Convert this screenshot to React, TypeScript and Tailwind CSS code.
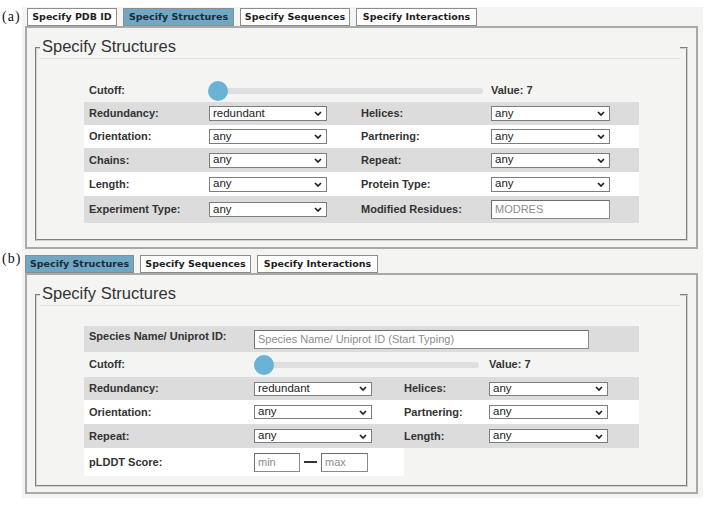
import React from "react";

// Two stacked screenshots of the "Specify Structures" search form, (a) and (b).

const SANS = "font-['Liberation_Sans',Arial,sans-serif]";

function Chevron() {
  return (
    <svg width="8" height="5" viewBox="0 0 8 5" className="shrink-0" aria-hidden="true">
      <path d="M1 1l3 3 3-3" fill="none" stroke="#1f1f1f" strokeWidth="1.7" />
    </svg>
  );
}

function Select({ value, w, h }: { value: string; w: string; h: string }) {
  return (
    <div
      className={`flex items-center justify-between border border-[#7d7d7d] bg-white pl-[3px] pr-[4px] text-[11.5px] leading-none text-[#222] ${w} ${h}`}
    >
      <span>{value}</span>
      <Chevron />
    </div>
  );
}

function TextBox({ placeholder, w }: { placeholder: string; w: string }) {
  return (
    <div
      className={`flex h-[19px] items-center border border-[#8a8a8a] border-t-[#6e6e6e] border-l-[#6e6e6e] bg-white pl-[3px] text-[11px] leading-none text-[#8c8c8c] ${w}`}
    >
      {placeholder}
    </div>
  );
}

function Label({ children, pad = true }: { children: React.ReactNode; pad?: boolean }) {
  return (
    <div className={`text-[11px] leading-[13px] font-bold text-[#333] ${pad ? "pl-[5px]" : ""}`}>
      {children}
    </div>
  );
}

function Slider({ pr }: { pr: string }) {
  return (
    <div className={`flex items-center ${pr}`}>
      <div className="relative z-10 h-[20px] w-[20px] shrink-0 rounded-full bg-[#6ab3d5]" />
      <div className="-ml-[10px] h-[6px] flex-1 rounded-full bg-[#dedede]" />
    </div>
  );
}

function Tab({ label, w, active = false }: { label: string; w: string; active?: boolean }) {
  return (
    <div
      className={`flex h-[18px] items-center justify-center border border-[#8c8c8c] font-['DejaVu_Sans',Verdana,sans-serif] text-[9.5px] font-bold ${w} ${
        active ? "bg-[#70a7c5] text-[#1b2a36]" : "bg-white text-[#1e1e1e]"
      }`}
    >
      {label}
    </div>
  );
}

function Legend() {
  return (
    <legend className="ml-[3px] w-[640px] border-b border-[#e0e0e0] pb-[2px] pl-[2px] text-[16.5px] leading-[19px] text-[#333]">
      Specify Structures
    </legend>
  );
}

function Tag({ children }: { children: string }) {
  return (
    <div className="w-[22px] pl-[2px] pt-[2px] font-['Liberation_Serif','Times_New_Roman',serif] text-[14px] leading-[16px] tracking-[1px] text-[#111]">
      {children}
    </div>
  );
}

const ROW_A = "grid grid-cols-[125px_147px_135px_148px] items-center";
const ROW_B = "grid grid-cols-[170px_150px_85px_150px] items-center";

export default function App() {
  return (
    <div className={`h-[506px] w-[709px] bg-white pt-[7px] ${SANS}`}>
      {/* (a) */}
      <div className="flex">
        <Tag>(a)</Tag>
        <div className="w-[681px] bg-[#f4f5f3] pl-[3px] pt-[1px]">
          <div className="flex gap-[6px] pl-[2px]">
            <Tab label="Specify PDB ID" w="w-[90px]" />
            <Tab label="Specify Structures" w="w-[111px]" active />
            <Tab label="Specify Sequences" w="w-[110px]" />
            <Tab label="Specify Interactions" w="w-[121px]" />
          </div>
          <div className="w-[673px] border-2 border-[#a9a9a9] px-[8px] pt-[9px] pb-[6px]">
            <fieldset className="border-2 border-[#d2d2d2] pb-[16px] [border-style:groove]">
              <Legend />
              <div className="mx-auto mt-[20px] w-[555px]">
                <div className={`${ROW_A} h-[23px]`}>
                  <Label>Cutoff:</Label>
                  <div className="col-span-2 -ml-[1px]">
                    <Slider pr="pr-[8px]" />
                  </div>
                  <Label pad={false}>Value: 7</Label>
                </div>
                <div className={`${ROW_A} h-[23px] bg-[#dcdcdc]`}>
                  <Label>Redundancy:</Label>
                  <Select value="redundant" w="w-[118px]" h="h-[15px]" />
                  <Label>Helices:</Label>
                  <Select value="any" w="w-[119px]" h="h-[15px]" />
                </div>
                <div className={`${ROW_A} h-[23px] bg-white`}>
                  <Label>Orientation:</Label>
                  <Select value="any" w="w-[118px]" h="h-[15px]" />
                  <Label>Partnering:</Label>
                  <Select value="any" w="w-[119px]" h="h-[15px]" />
                </div>
                <div className={`${ROW_A} h-[24px] bg-[#dcdcdc]`}>
                  <Label>Chains:</Label>
                  <Select value="any" w="w-[118px]" h="h-[15px]" />
                  <Label>Repeat:</Label>
                  <Select value="any" w="w-[119px]" h="h-[15px]" />
                </div>
                <div className={`${ROW_A} h-[24px] bg-white`}>
                  <Label>Length:</Label>
                  <Select value="any" w="w-[118px]" h="h-[15px]" />
                  <Label>Protein Type:</Label>
                  <Select value="any" w="w-[119px]" h="h-[15px]" />
                </div>
                <div className={`${ROW_A} h-[27px] bg-[#dcdcdc]`}>
                  <Label>Experiment Type:</Label>
                  <Select value="any" w="w-[118px]" h="h-[15px]" />
                  <Label>Modified Residues:</Label>
                  <TextBox placeholder="MODRES" w="w-[119px]" />
                </div>
              </div>
            </fieldset>
          </div>
        </div>
      </div>

      {/* (b) */}
      <div className="flex">
        <Tag>(b)</Tag>
        <div className="w-[681px] bg-[#f4f5f3] pl-[3px] pt-[6px] pb-[4px]">
          <div className="flex gap-[6px]">
            <Tab label="Specify Structures" w="w-[109px]" active />
            <Tab label="Specify Sequences" w="w-[111px]" />
            <Tab label="Specify Interactions" w="w-[121px]" />
          </div>
          <div className="w-[673px] border-2 border-[#a9a9a9] px-[8px] pt-[9px] pb-[5px]">
            <fieldset className="border-2 border-[#d2d2d2] pb-[9px] [border-style:groove]">
              <Legend />
              <div className="mx-auto mt-[20px] w-[555px]">
                <div className={`${ROW_B} h-[26px] items-start bg-[#dcdcdc] pt-[4px]`}>
                  <Label>Species Name/ Uniprot ID:</Label>
                  <div className="col-span-3">
                    <TextBox placeholder="Species Name/ Uniprot ID (Start Typing)" w="w-[335px]" />
                  </div>
                </div>
                <div className={`${ROW_B} h-[25px]`}>
                  <Label>Cutoff:</Label>
                  <div className="col-span-2">
                    <Slider pr="pr-[10px]" />
                  </div>
                  <Label pad={false}>Value: 7</Label>
                </div>
                <div className={`${ROW_B} h-[23px] bg-[#dcdcdc]`}>
                  <Label>Redundancy:</Label>
                  <Select value="redundant" w="w-[118px]" h="h-[14px]" />
                  <Label pad={false}>Helices:</Label>
                  <Select value="any" w="w-[119px]" h="h-[14px]" />
                </div>
                <div className={`${ROW_B} h-[24px] bg-white`}>
                  <Label>Orientation:</Label>
                  <Select value="any" w="w-[118px]" h="h-[14px]" />
                  <Label pad={false}>Partnering:</Label>
                  <Select value="any" w="w-[119px]" h="h-[14px]" />
                </div>
                <div className={`${ROW_B} h-[24px] bg-[#dcdcdc]`}>
                  <Label>Repeat:</Label>
                  <Select value="any" w="w-[118px]" h="h-[14px]" />
                  <Label pad={false}>Length:</Label>
                  <Select value="any" w="w-[119px]" h="h-[14px]" />
                </div>
                <div className={`${ROW_B} h-[28px]`}>
                  <div className="col-span-2 grid h-full grid-cols-[170px_150px] items-center bg-white">
                    <Label>pLDDT Score:</Label>
                    <div className="flex items-center">
                      <TextBox placeholder="min" w="w-[46px]" />
                      <div className="mx-[4px] h-[1.5px] w-[13px] bg-[#333]" />
                      <TextBox placeholder="max" w="w-[47px]" />
                    </div>
                  </div>
                </div>
              </div>
            </fieldset>
          </div>
        </div>
      </div>
    </div>
  );
}
